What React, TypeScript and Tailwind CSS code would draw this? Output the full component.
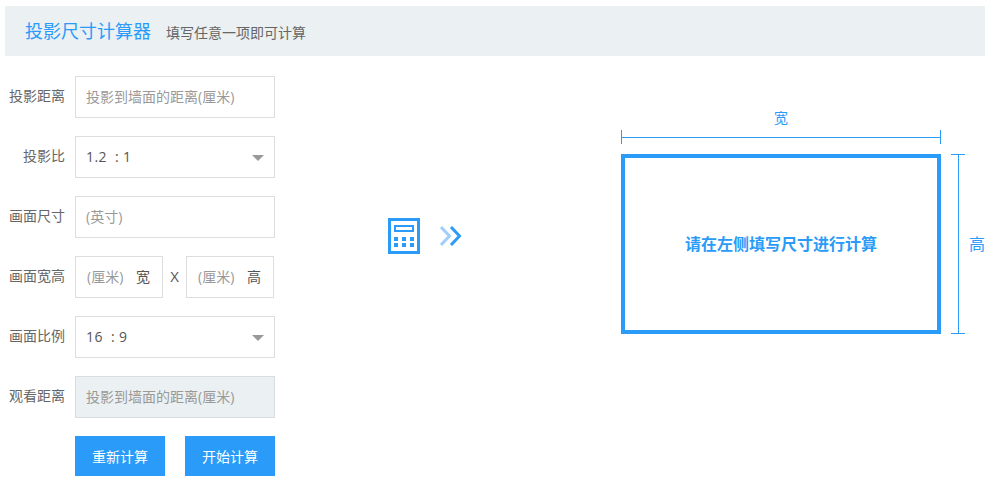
import React from "react";

const font = "font-['Open_Sans','Noto_Sans_CJK_SC',sans-serif]";

const Row = ({ label, children }: { label: string; children: React.ReactNode }) => (
  <div className="flex items-center h-[42px] mb-[18px]">
    <label className="w-[60px] mr-[10px] pb-[4px] text-right text-[14px] text-[#666] shrink-0">{label}</label>
    {children}
  </div>
);

const Select = ({ value }: { value: string }) => (
  <div className="relative w-[200px] h-[42px] border border-[#ddd] bg-white pl-[10px] pb-[2px] flex items-center text-[14px] tracking-[0.4px] text-[#555] whitespace-pre">
    {value}
    <span className="absolute right-[10px] top-[18px] w-0 h-0 border-x-[6px] border-x-transparent border-t-[6px] border-t-[#999]" />
  </div>
);

const Dim = ({ text }: { text: string }) => (
  <div className="w-[88px] h-[42px] border border-[#ddd] pl-[11px] pr-[12px] pb-[2px] flex items-center justify-between text-[14px]">
    <span className="text-[#999]">(厘米)</span>
    <span className="text-[#555]">{text}</span>
  </div>
);

export default function App() {
  return (
    <div className={`${font} w-[994px] h-[494px] bg-white pt-[6px] pl-[5px] overflow-hidden`}>
      <div className="w-[980px] h-[50px] bg-[#ebf0f2] pl-[20px] flex items-center">
        <h1 className="text-[18px] text-[#2a9bf8] font-normal">投影尺寸计算器</h1>
        <span className="ml-[15px] mt-[2px] text-[14px] text-[#666]">填写任意一项即可计算</span>
      </div>

      <div className="flex mt-[20px]">
        <div className="w-[270px] shrink-0">
          <Row label="投影距离">
            <div className="w-[200px] h-[42px] border border-[#ddd] pl-[10px] pb-[2px] flex items-center text-[14px] text-[#999]">投影到墙面的距离(厘米)</div>
          </Row>
          <Row label="投影比"><Select value="1.2  : 1" /></Row>
          <Row label="画面尺寸">
            <div className="w-[200px] h-[42px] border border-[#ddd] pl-[10px] pb-[2px] flex items-center text-[14px] text-[#999]">(英寸)</div>
          </Row>
          <Row label="画面宽高">
            <Dim text="宽" />
            <span className="w-[23px] pb-[2px] text-center text-[15px] text-[#555]">X</span>
            <Dim text="高" />
          </Row>
          <Row label="画面比例"><Select value="16  : 9" /></Row>
          <Row label="观看距离">
            <div className="w-[200px] h-[42px] border border-[#d9dddf] bg-[#ebf0f2] pl-[10px] pb-[2px] flex items-center text-[14px] text-[#999]">投影到墙面的距离(厘米)</div>
          </Row>
          <div className="flex ml-[70px] gap-[20px]">
            <button className="w-[90px] h-[40px] bg-[#2a9bf8] text-white text-[14px]">重新计算</button>
            <button className="w-[90px] h-[40px] bg-[#2a9bf8] text-white text-[14px]">开始计算</button>
          </div>
        </div>

        <div className="ml-[113px] mt-[142px] h-[36px] flex items-center gap-[20px] self-start">
          <svg width="32" height="36" viewBox="0 0 32 36">
            <rect x="1.5" y="1.5" width="29" height="33" fill="none" stroke="#2a9bf8" strokeWidth="3" />
            <rect x="7" y="8" width="18" height="5" fill="none" stroke="#2a9bf8" strokeWidth="2" />
            {[6, 14, 22].map((x) =>
              [19, 25].map((y) => <rect key={`${x}-${y}`} x={x} y={y} width="4" height="4" fill="#2a9bf8" />)
            )}
          </svg>
          <svg width="22" height="20" viewBox="0 0 22 20">
            <path d="M1 1 9.5 10 1 19" fill="none" stroke="#9fd0fb" strokeWidth="3" />
            <path d="M11 1 19.5 10 11 19" fill="none" stroke="#2a9bf8" strokeWidth="3" />
          </svg>
        </div>

        <div className="ml-[159px] mt-[30px] flex self-start items-start text-[#2a9bf8]">
          <div className="w-[320px]">
            <div className="h-[24px] text-center text-[14px] leading-[24px]">宽</div>
            <div className="h-[14px] border-x border-[#2a9bf8] flex items-center">
              <div className="w-full h-px bg-[#2a9bf8]" />
            </div>
            <div className="mt-[10px] w-[320px] h-[180px] border-[4px] border-[#2a9bf8] flex items-center justify-center text-[16px] font-semibold">
              请在左侧填写尺寸进行计算
            </div>
          </div>
          <div className="mt-[48px] ml-[10px] w-[14px] h-[180px] border-y border-[#2a9bf8] flex justify-center">
            <div className="w-px h-full bg-[#2a9bf8]" />
          </div>
          <div className="mt-[48px] ml-[4px] h-[180px] flex items-center text-[16px]">高</div>
        </div>
      </div>
    </div>
  );
}
